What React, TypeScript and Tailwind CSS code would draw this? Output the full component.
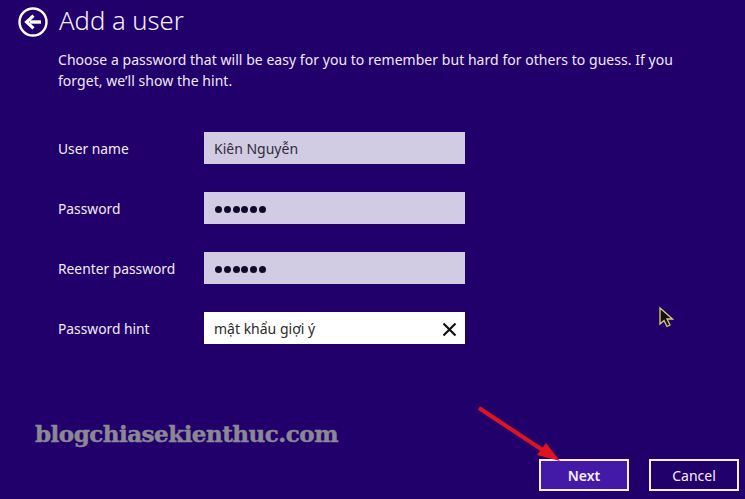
import React from "react";

const font = "[font-family:'Noto_Sans','Open_Sans',sans-serif]";

function Row({ label, children }: { label: string; children: React.ReactNode }) {
  return (
    <div className="flex items-center h-8">
      <div className="w-[146px] pt-[2px] text-[13.8px] text-[#f1ecfa]">{label}</div>
      {children}
    </div>
  );
}

function Dots() {
  return (
    <div className="flex gap-[1.8px] pt-[3px]">
      {[0, 1, 2, 3, 4, 5].map((i) => (
        <span key={i} className="w-[7px] h-[7px] rounded-full bg-[#120a2a]" />
      ))}
    </div>
  );
}

export default function App() {
  return (
    <div className={`relative w-[745px] h-[499px] overflow-hidden bg-[#21006c] ${font}`}>
      <div className="flex items-center pl-[18px] pt-[5px] h-[38px]">
        <svg width="30" height="30" viewBox="0 0 30 30" fill="none" className="shrink-0">
          <circle cx="15" cy="15" r="13.5" stroke="#fff" strokeWidth="2.4" />
          <path d="M23 15H12" stroke="#fff" strokeWidth="3.4" />
          <path d="M15.5 8.6 8.6 15l6.9 6.4" stroke="#fff" strokeWidth="3.2" />
        </svg>
        <h1 className="ml-[11px] -mt-px text-[25.6px] leading-none font-light text-[#f4f0fb]">Add a user</h1>
      </div>
      <p className="ml-[58px] mt-[11px] w-[660px] text-[14px] leading-[21px] text-[#efe9fa] tracking-[0.04px]">
        Choose a password that will be easy for you to remember but hard for others to guess. If you<br />
        forget, we’ll show the hint.
      </p>
      <div className="ml-[58px] mt-[41px] flex flex-col gap-7">
        <Row label="User name">
          <div className="w-[261px] h-8 bg-[#d1cbe3] flex items-center pl-[10px] text-[14px] text-[#2f2b3a]">Kiên Nguyễn</div>
        </Row>
        <Row label="Password">
          <div className="w-[261px] h-8 bg-[#d1cbe6] flex items-center pl-[11px]"><Dots /></div>
        </Row>
        <Row label="Reenter password">
          <div className="w-[261px] h-8 bg-[#d1cbe3] flex items-center pl-[11px]"><Dots /></div>
        </Row>
        <Row label="Password hint">
          <div className="w-[261px] h-8 bg-white flex items-center justify-between pl-[10px] pr-[8px] text-[14px] text-[#2b2b2b]">
            <span>mật khẩu giợi ý</span>
            <svg width="15" height="15" viewBox="0 0 15 15" fill="none" className="mt-[2px]">
              <path d="M1.500 1.500l12 12M13.500 1.500l-12 12" stroke="#111" strokeWidth="2.200" />
            </svg>
          </div>
        </Row>
      </div>
      <div className="absolute right-[6px] bottom-[8px] flex gap-5">
        <button className="w-[90px] h-8 border-2 border-[#f6effa] bg-[#4319a8] text-[14px] font-semibold text-[#f6effa]">Next</button>
        <button className="w-[90px] h-8 border-2 border-[#f6effa] bg-[#21006c] text-[14px] text-[#f6effa]">Cancel</button>
      </div>
      <div className="absolute left-[35px] top-[418px] font-['DejaVu_Serif',serif] font-bold text-[23px] leading-8 tracking-[-0.5px] text-[#8b8794] [-webkit-text-stroke:0.5px_#8b8794]">blogchiasekienthuc.com</div>
      <svg className="absolute left-[476px] top-[405px]" width="90" height="62" viewBox="0 0 90 62" fill="none">
        <path d="M3 3 68 46" stroke="#e0141f" strokeWidth="4" />
        <path d="M61 50 L70 38 L84 56 Z" fill="#e0141f" />
      </svg>
      <svg className="absolute left-[658px] top-[306px]" width="16" height="23" viewBox="0 0 16 23" fill="none">
        <path d="M2 2v16l4-3.500 3 6 3-1.500-3-6h5.500Z" fill="#111" stroke="#d8d27a" strokeWidth="1.300" />
      </svg>
    </div>
  );
}
